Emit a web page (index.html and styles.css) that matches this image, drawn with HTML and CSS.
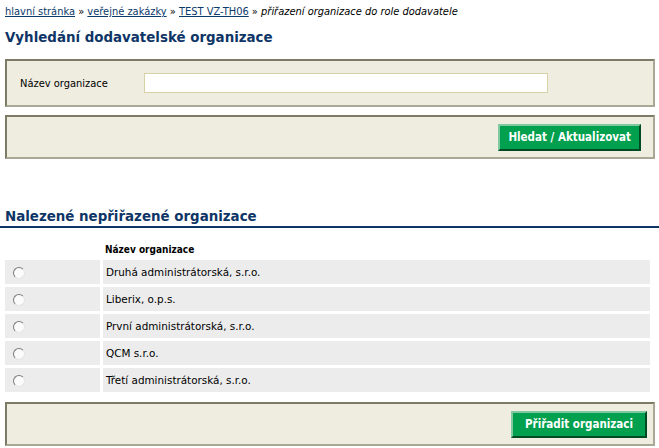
FILE: index.html
```html
<!DOCTYPE html>
<html lang="cs">
<head>
    <meta charset="UTF-8">
    <title>Přiřazení organizace do role dodavatele</title>
    <link rel="stylesheet" href="styles.css">
</head>
<body>
    <div class="crumbs">
        <a href="#">hlavní stránka</a> » <a href="#">veřejné zakázky</a> » <a href="#">TEST VZ-TH06</a> » <em>přiřazení organizace do role dodavatele</em>
    </div>

    <h1>Vyhledání dodavatelské organizace</h1>

    <div class="box search-box">
        <label for="nazev">Název organizace</label>
        <input type="text" id="nazev">
    </div>

    <div class="box actions">
        <button class="btn">Hledat / Aktualizovat</button>
    </div>

    <h2>Nalezené nepřiřazené organizace</h2>

    <table class="results">
        <thead>
            <tr><th></th><th>Název organizace</th></tr>
        </thead>
        <tbody>
            <tr><td class="pick"><input type="radio" name="org"></td><td>Druhá administrátorská, s.r.o.</td></tr>
            <tr><td class="pick"><input type="radio" name="org"></td><td>Liberix, o.p.s.</td></tr>
            <tr><td class="pick"><input type="radio" name="org"></td><td>První administrátorská, s.r.o.</td></tr>
            <tr><td class="pick"><input type="radio" name="org"></td><td>QCM s.r.o.</td></tr>
            <tr><td class="pick"><input type="radio" name="org"></td><td>Třetí administrátorská, s.r.o.</td></tr>
        </tbody>
    </table>

    <div class="box actions assign">
        <button class="btn">Přiřadit organizaci</button>
    </div>
</body>
</html>
```

FILE: styles.css
```css
body {
    margin: 0;
    padding: 5px 0 0 0;
    font-family: "DejaVu Sans", Verdana, sans-serif;
    font-size: 10.4px;
    color: #000;
    background: #fff;
}
a { color: #0b3a6b; }
.crumbs {
    padding-left: 5px;
    font-size: 9.9px;
    line-height: 14px;
}
h1 {
    margin: 9px 0 0 5px;
    font-size: 13.4px;
    color: #0e3566;
    line-height: 20px;
}
.box {
    margin: 0 4px 0 5px;
    background: #efece0;
    border-top: 2px solid #7d7a66;
    border-left: 2px solid #7d7a66;
    border-right: 2px solid #a9a796;
    border-bottom: 2px solid #a9a796;
}
.search-box {
    margin-top: 11px;
    height: 44px;
    display: flex;
    align-items: center;
}
.search-box label {
    width: 124px;
    padding-left: 13px;
    font-family: "DejaVu Sans Condensed", "DejaVu Sans", sans-serif;
    font-size: 11px;
}
.search-box input {
    width: 398px;
    height: 18px;
    padding: 0 2px;
    border: 1px solid #d6d2a6;
    background: #fff;
}
.actions {
    margin-top: 8px;
    height: 40px;
    display: flex;
    align-items: center;
    justify-content: flex-end;
    padding-right: 12px;
}
.btn {
    height: 27px;
    padding: 0 8px;
    background: #00a04e;
    color: #fff;
    font-family: "DejaVu Sans Condensed", "DejaVu Sans", sans-serif;
    font-weight: bold;
    font-size: 11.5px;
    border-top: 2px solid #80c8a0;
    border-left: 2px solid #80c8a0;
    border-right: 2px solid #004a24;
    border-bottom: 2px solid #004a24;
}
h2 {
    margin: 49px 0 0 0;
    padding: 0 0 0 5px;
    font-size: 13.4px;
    color: #0e3566;
    line-height: 18px;
    border-bottom: 2px solid #0e3566;
}
.results {
    margin: 10px 0 0 2px;
    border-spacing: 3px;
}
.results th {
    text-align: left;
    height: 16px;
    padding: 0 0 0 2px;
    font-family: "DejaVu Sans Condensed", "DejaVu Sans", sans-serif;
    font-size: 10px;
}
.results td {
    height: 24px;
    padding: 0 0 0 3px;
    background: #ececec;
    width: 544px;
}
.results td.pick {
    width: 95px;
    padding: 0;
}
.pick input {
    appearance: none;
    margin: 0 0 0 8px;
    width: 12px;
    height: 12px;
    border-radius: 50%;
    border: 1px solid;
    border-color: #7a7a7a #e4e4e4 #e4e4e4 #7a7a7a;
    background: #fbfbfb;
    vertical-align: middle;
}
.assign {
    margin-top: 7px;
    padding-right: 6px;
}
.assign .btn {
    padding: 0 12px;
}
```
